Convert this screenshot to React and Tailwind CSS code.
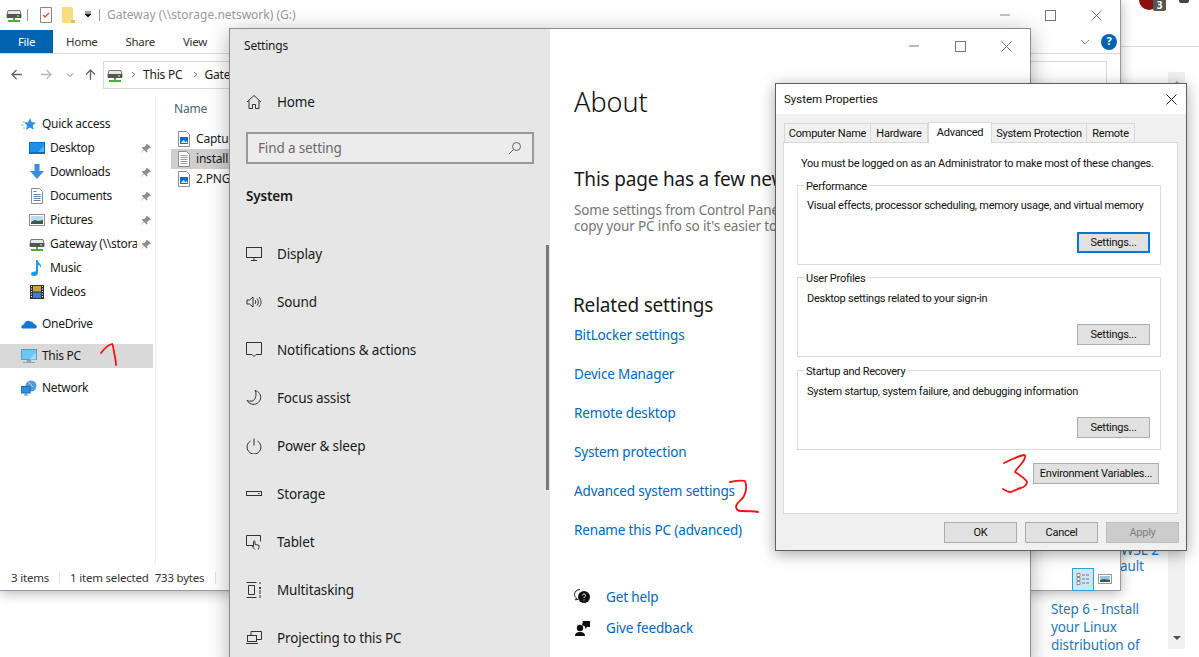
import React from "react";

const Ic = ({ s = 16, vb, className = "", children }) => (
  <svg width={s} height={s} viewBox={vb || `0 0 ${s} ${s}`} fill="none" className={"shrink-0 " + className}>{children}</svg>
);

const Drive = () => (
  <Ic s={16}>
    <path d="M2 3.500h12l1 4v3H1v-3z" fill="#e8e8e8" stroke="#777" />
    <rect x="1" y="7" width="14" height="4" fill="#555" />
    <circle cx="12" cy="9" r="1" fill="#7fe04f" />
    <path d="M7 11h2v2h5v2H2v-2h5z" fill="#4caf32" />
  </Ic>
);
const Pin = () => (
  <Ic s={11} className="ml-auto">
    <path d="M6.500 1l3.500 3.500-1 .8-.8-.2-2 2 .2 1.700-.8.7-2.500-2.500-2.500 2.700-.3-.3 2.500-2.700-2-2 .8-.8 1.600.2 2-2-.2-.9z" fill="#8a8f96" />
  </Ic>
);
const FileImg = () => (
  <Ic s={16}>
    <path d="M2.500.5h8l3 3v12h-11z" fill="#fff" stroke="#8d8d8d" />
    <rect x="4" y="6" width="8" height="7" fill="#0b6fc4" />
    <path d="M4.500 12l3-3 2 2 1-1 1.500 2z" fill="#cfe8ff" />
  </Ic>
);
const FileTxt = () => (
  <Ic s={16}>
    <path d="M2.500.5h8l3 3v12h-11z" fill="#fff" stroke="#8d8d8d" />
    <path d="M4.500 4.500h7M4.500 6.500h7M4.500 8.500h7M4.500 10.500h7M4.500 12.500h7" stroke="#9a9a9a" />
  </Ic>
);

const NavIcons = {
  quick: (
    <Ic s={16}><path d="M9 2l1.800 4.200 4.200.3-3.300 2.800 1.100 4.400L9 11.400l-4 2.300 1.100-4.400L3 6.500l4.200-.3z" fill="#2b8fe3" /><path d="M1 6h3M0 9h3M2 12h2" stroke="#8cc4f0" /></Ic>
  ),
  desktop: (
    <Ic s={16}><rect x=".5" y="2.500" width="15" height="10" fill="#1e90e8" stroke="#0a6fc4" /><path d="M0 13.500h16" stroke="#0a6fc4" /><path d="M9 12l6-6v6z" fill="#55b4f5" /></Ic>
  ),
  down: (
    <Ic s={16}><path d="M5.500 0h5v7H15l-7 8-7-8h4.500z" fill="#3a8fdc" /></Ic>
  ),
  docs: (
    <Ic s={16}><path d="M2.500.5h8l3 3v12h-11z" fill="#fff" stroke="#8d8d8d" /><path d="M4.500 3.500h3M4.500 6.500h7M4.500 8.500h7M4.500 10.500h7M4.500 12.500h7" stroke="#5a80a8" /></Ic>
  ),
  pics: (
    <Ic s={16}><rect x=".5" y="2.500" width="15" height="11" fill="#fff" stroke="#8d8d8d" /><rect x="2" y="4" width="12" height="8" fill="#bcdcf0" /><path d="M2 10l4-2 3 1 5-1v4H2z" fill="#3d5a4c" /></Ic>
  ),
  music: (
    <Ic s={16}><path d="M7 0h1.500c.5 3 4.500 4 3.500 8-.4-1.500-1.500-2.800-3-3v7.500C9 14.500 7.500 16 5 16c-2 0-3-1-3-2 0-1.800 2.500-3 5-2.500z" fill="#1b9af0" /></Ic>
  ),
  video: (
    <Ic s={16}><rect x="1" y="1" width="14" height="14" fill="#333" /><rect x="4" y="2" width="8" height="5.500" fill="#c9a53c" /><rect x="4" y="8.500" width="8" height="5.500" fill="#3d7ed0" /><path d="M2 2.500h1M2 5h1M2 7.500h1M2 10h1M2 12.500h1M13 2.500h1M13 5h1M13 7.500h1M13 10h1M13 12.500h1" stroke="#fff" /></Ic>
  ),
  cloud: (
    <Ic s={16}><path d="M1 12.500c-1.500-1.500-.5-4 2-4 .5-3 4-5 6.500-3 2 0 3 1 3.300 2.500 1.500 0 3 1.300 3 2.800 0 1-.8 1.700-1.800 1.700H2.500c-.6 0-1.100 0-1.500 0z" fill="#0f78d4" /></Ic>
  ),
  pc: (
    <Ic s={16}><rect x=".5" y="1.500" width="15" height="10" fill="#6fc5f7" stroke="#5a9cc8" /><path d="M8 11.500l7-7v7z" fill="#9ddcfb" /><path d="M6 12.500h4v1H6zM2 14.500h12" stroke="#8fa4b3" /></Ic>
  ),
  net: (
    <Ic s={16}><circle cx="10" cy="6" r="5.500" fill="#4e9bd8" /><path d="M7 2c3 1 3 4 5 5" stroke="#b5dcf5" /><rect x="0" y="6.500" width="9" height="6.500" fill="#2b90e0" stroke="#1a6cae" /><path d="M3 15h4M5 13v2" stroke="#5b7f9c" /></Ic>
  ),
};

const NavItem = ({ icon, label, pin, sub, active, clip }) => (
  <div className={`h-6 flex items-center text-[12px] tracking-[-0.3px] text-[#1a1a1a] ${sub ? "pl-[29px]" : "pl-[21px]"} pr-[3px] ${active ? "bg-[#d9d9d9]" : ""}`}>
    <span className="w-[21px]">{icon}</span>
    <span className={clip ? "w-[87px] overflow-hidden whitespace-nowrap" : "whitespace-nowrap"}>{label}</span>
    {pin && <Pin />}
  </div>
);

const Explorer = () => (
  <div className="absolute left-0 top-0 w-[1121px] h-[591px] bg-white border-r border-b border-[#9a9a9a] shadow-[0_2px_12px_rgba(0,0,0,0.3)] flex flex-col">
    <div className="h-[30px] flex items-center pl-[6px] shrink-0">
      <Drive />
      <span className="w-px h-[12px] bg-[#999] ml-[5px]" />
      <Ic s={16} className="ml-[10px]"><path d="M2.500 .5h11v15h-11z" fill="#fff" stroke="#888" /><path d="M5 8l2 2 4-4" stroke="#e2531e" strokeWidth="1.400" /></Ic>
      <Ic s={16} className="ml-[7px]"><path d="M1 0h10l1 2v14H1z" fill="#fbdc7d" /><path d="M10 13h4v3h-4z" fill="#e8c050" /></Ic>
      <Ic s={8} className="ml-[7px]"><path d="M1 1h6M1 3h6l-3 3z" fill="#111" stroke="#111" strokeWidth=".8" /></Ic>
      <span className="w-px h-[12px] bg-[#999] ml-[7px]" />
      <span className="ml-[7px] text-[12px] text-[#9b9b9b] whitespace-nowrap">Gateway (\\storage.netswork) (G:)</span>
      <div className="ml-auto flex items-center">
        <Ic s={10} className="mr-[35px]"><path d="M0 5h10" stroke="#888" /></Ic>
        <Ic s={11} className="mr-[35px]"><rect x=".5" y=".5" width="10" height="10" stroke="#777" /></Ic>
        <Ic s={11} className="mr-[18px]"><path d="M.5 .5l10 10M10.500 .5l-10 10" stroke="#777" /></Ic>
      </div>
    </div>
    <div className="h-[24px] flex items-center border-b border-[#dadada] shrink-0 text-[11.500px] tracking-[-0.3px] text-[#333]">
      <span className="w-[53px] h-[23px] bg-[#0063b1] text-white flex items-center justify-center">File</span>
      <span className="ml-[13px]">Home</span>
      <span className="ml-[28px]">Share</span>
      <span className="ml-[28px]">View</span>
      <div className="ml-auto flex items-center pr-[3px]">
        <Ic s={10} className="mr-[11px]"><path d="M1 3l4 4 4-4" stroke="#888" /></Ic>
        <div className="w-4 h-4 rounded-full bg-[#0063b1] text-white text-[11px] font-bold flex items-center justify-center">?</div>
      </div>
    </div>
    <div className="h-[42px] flex items-center shrink-0 pl-[10px] pr-[13px] pb-[1px]">
      <Ic s={13}><path d="M12 6.500H2M6.500 2l-4.500 4.500 4.500 4.500" stroke="#666" strokeWidth="1.300" /></Ic>
      <Ic s={13} className="ml-[17px]"><path d="M1 6.500h10M6.500 2l4.500 4.500-4.500 4.500" stroke="#bbb" strokeWidth="1.300" /></Ic>
      <Ic s={8} className="ml-[13px]"><path d="M1 2.500l3 3 3-3" stroke="#777" /></Ic>
      <Ic s={13} className="ml-[10px]"><path d="M6.500 12V2M2 6.500L6.500 2 11 6.500" stroke="#666" strokeWidth="1.300" /></Ic>
      <div className="ml-[6px] flex-1 h-[28px] border border-[#d9d9d9] flex items-center pl-[3px] text-[12px] tracking-[-0.2px] text-[#1a1a1a]">
        <Drive />
        <Ic s={7} className="ml-[7px]"><path d="M2 1l3 2.500L2 6" stroke="#777" /></Ic>
        <span className="ml-[6px]">This PC</span>
        <Ic s={7} className="ml-[9px]"><path d="M2 1l3 2.500L2 6" stroke="#777" /></Ic>
        <span className="ml-[6px] whitespace-nowrap">Gateway (\\storage.netswork) (G:)</span>
      </div>
    </div>
    <div className="flex-1 flex min-h-0">
      <div className="w-[156px] shrink-0 border-r border-[#efefef] pt-[16px] flex flex-col">
        <NavItem icon={NavIcons.quick} label="Quick access" />
        <NavItem sub icon={NavIcons.desktop} label="Desktop" pin />
        <NavItem sub icon={NavIcons.down} label="Downloads" pin />
        <NavItem sub icon={NavIcons.docs} label="Documents" pin />
        <NavItem sub icon={NavIcons.pics} label="Pictures" pin />
        <NavItem sub clip icon={<Drive />} label="Gateway (\\storage.netswork) (G:)" pin />
        <NavItem sub icon={NavIcons.music} label="Music" />
        <NavItem sub icon={NavIcons.video} label="Videos" />
        <div className="h-2" />
        <NavItem icon={NavIcons.cloud} label="OneDrive" />
        <div className="h-2" />
        <div className="w-[153px]"><NavItem active icon={NavIcons.pc} label="This PC" /></div>
        <div className="h-2" />
        <NavItem icon={NavIcons.net} label="Network" />
      </div>
      <div className="flex-1 pl-[15px] text-[12px] tracking-[-0.2px] text-[#1a1a1a]">
        <div className="h-[26px] pl-[3px] flex items-center text-[#4c607a]">Name</div>
        <div className="h-[6.500px]" />
        {[
          [<FileImg />, "Capture.PNG", false],
          [<FileTxt />, "install script.txt", true],
          [<FileImg />, "2.PNG", false],
        ].map(([i, t, sel]) => (
          <div key={t} className={`h-[20.250px] flex items-center gap-[4px] pl-[5px] ${sel ? "bg-[#cfcfcf]" : ""}`}>
            {i}
            <span className="whitespace-nowrap">{t}</span>
          </div>
        ))}
      </div>
    </div>
    <div className="h-[25px] shrink-0 flex items-center pl-[11px] text-[11.500px] tracking-[-0.2px] text-[#333]">
      <span>3 items</span>
      <span className="w-px h-[12px] bg-[#e5e5e5] ml-[10px] mr-[10px]" />
      <span>1 item selected</span>
      <span className="ml-[6px]">733 bytes</span>
      <span className="w-px h-[12px] bg-[#e5e5e5] ml-[11px]" />
      <div className="ml-auto mr-[4px] mt-[3px] flex items-center">
        <div className="w-[22px] h-[23px] bg-[#cce8f6] border border-[#2ea0dc] flex items-center justify-center">
          <Ic s={14}><path d="M1 1.500h3v3H1zM1 5.500h3v3H1zM1 9.500h3v3H1z" stroke="#888" fill="#fff" /><path d="M6 3h3M10 3h3M6 7h3M10 7h3M6 11h3M10 11h3" stroke="#777" /></Ic>
        </div>
        <div className="w-[22px] flex justify-center">
          <Ic s={14}><rect x=".5" y="2.500" width="13" height="9" fill="#fff" stroke="#999" /><rect x="2" y="4" width="10" height="6" fill="#9cc4e4" /><path d="M2 8l4-1 6 1v2H2z" fill="#3d5a4c" /></Ic>
        </div>
      </div>
    </div>
  </div>
);

const S = { fill: "none", stroke: "#333" };
const SetIcons = {
  home: <><path {...S} d="M1 8l7-6.500L15 8M3 6.500v8h3.500v-4h3v4H13v-8" /></>,
  display: <><rect {...S} x=".5" y="1.500" width="15" height="10" /><path {...S} d="M8 11.500v3M5 14.500h6" /></>,
  sound: <><path {...S} d="M1 6v4h2.500L7 13V3L3.500 6zM9 6c1 1 1 3 0 4M11 4.500c1.800 2 1.800 5 0 7M13 3c2.700 3 2.700 7 0 10" /></>,
  notif: <><path {...S} d="M.5 .5h15v12h-5.500l-2 2-2-2H.5z" /></>,
  focus: <><path {...S} d="M9 .5c4 1 6.500 4.500 5.500 8.500-1 3.500-5 6.500-9 5-2-.5-3.500-2-4.500-3.500 4 1.500 7 .5 8-2 1.200-2.500 1.500-5.500 0-8z" /></>,
  power: <><path {...S} d="M8 .5v7M4.500 3a7 7 0 1 0 7 0" /></>,
  storage: <><rect {...S} x=".5" y="5.500" width="15" height="4" /><path {...S} d="M12 7.500h1.500" /></>,
  tablet: <><path {...S} d="M7 11.500H.5v-10h14v6" /><path {...S} d="M9 15.500c-1-1-2.500-2.500-2.500-3.500l1 .5v-5c0-1 1.500-1 1.500 0v3l4 .8v2.200l-.7 2" /></>,
  multi: <><path {...S} d="M.5 .5h10M.5 15.500h10M2.500 3.500h6v9h-6zM14 0v2M14 13v3" /><rect x="13" y="5" width="2" height="2" fill="#333" /><path {...S} d="M14 8v4" /></>,
  project: <><path {...S} d="M5 5V1.500h10.500v8H11" /><rect {...S} x="1.500" y="5.500" width="9" height="6" /><path {...S} d="M0 13.500h12" /></>,
};
const SetIcon = ({ d }) => <Ic s={16}>{SetIcons[d]}</Ic>;

const SetRow = ({ icon, label }) => (
  <div className="h-[48px] flex items-center gap-[15px] pl-[16px] text-[13.500px] tracking-[-0.15px] text-[#1a1a1a] shrink-0">
    <SetIcon d={icon} />
    <span className="whitespace-nowrap">{label}</span>
  </div>
);

const Links = ["BitLocker settings", "Device Manager", "Remote desktop", "System protection", "Advanced system settings", "Rename this PC (advanced)"];

const Settings = () => (
  <div className="absolute left-[229px] top-[28px] w-[802px] h-[640px] bg-white border border-[#8c8c8c] shadow-[0_4px_20px_rgba(0,0,0,0.3)] flex overflow-hidden">
    <div className="w-[320px] shrink-0 bg-[#e6e6e6] relative flex flex-col">
      <div className="h-[34px] flex items-center pl-[14px] text-[12px] tracking-[-0.2px] text-[#1a1a1a]">Settings</div>
      <div className="h-[48px] mt-[15px] flex items-center gap-[15px] pl-[16px] text-[13.500px] tracking-[-0.15px] text-[#1a1a1a] shrink-0">
        <SetIcon d="home" />
        <span>Home</span>
      </div>
      <div className="mt-[6px] ml-[16px] w-[288px] h-[32px] border-2 border-[#999] bg-[#ececec] flex items-center px-[10px] text-[13.500px] tracking-[-0.15px] text-[#6a6a6a]">
        <span>Find a setting</span>
        <Ic s={14} className="ml-auto"><circle cx="8.500" cy="5.500" r="4" stroke="#666" /><path d="M5.500 8.500L1 13" stroke="#666" /></Ic>
      </div>
      <div className="mt-[21px] pl-[16px] h-[22px] flex items-center text-[13.500px] font-semibold tracking-[-0.15px] text-[#1a1a1a]">System</div>
      <div className="h-[23px]" />
      <SetRow icon="display" label="Display" />
      <SetRow icon="sound" label="Sound" />
      <SetRow icon="notif" label="Notifications & actions" />
      <SetRow icon="focus" label="Focus assist" />
      <SetRow icon="power" label="Power & sleep" />
      <SetRow icon="storage" label="Storage" />
      <SetRow icon="tablet" label="Tablet" />
      <SetRow icon="multi" label="Multitasking" />
      <SetRow icon="project" label="Projecting to this PC" />
      <div className="absolute left-[316px] top-[216px] w-[3px] h-[245px] bg-[#7a7a7a]" />
    </div>
    <div className="flex-1 relative pl-[24px] flex flex-col">
      <div className="absolute right-0 top-0 h-[34px] flex items-center">
        <Ic s={10} className="mr-[36px]"><path d="M0 5h10" stroke="#777" /></Ic>
        <Ic s={11} className="mr-[35px]"><rect x=".5" y=".5" width="10" height="10" stroke="#777" /></Ic>
        <Ic s={11} className="mr-[18px]"><path d="M.5 .5l10 10M10.500 .5l-10 10" stroke="#777" /></Ic>
      </div>
      <div className="mt-[50px] h-[44px] flex items-center text-[27px] font-light text-[#111] leading-none">About</div>
      <div className="mt-[42px] h-[28px] flex items-center text-[19px] tracking-[-0.2px] text-[#1a1a1a] whitespace-nowrap">This page has a few new settings</div>
      <div className="mt-[9px] text-[13.500px] tracking-[-0.15px] leading-[16px] text-[#767676] whitespace-nowrap">
        <div>Some settings from Control Panel have moved, and you can</div>
        <div>copy your PC info so it's easier to share.</div>
      </div>
      <div className="mt-[57px] -ml-px h-[28px] flex items-center text-[19px] tracking-[-0.2px] text-[#1a1a1a]">Related settings</div>
      <div className="-mt-[3px] flex flex-col">
        {Links.map((l) => (
          <div key={l} className="h-[39px] flex items-center text-[13.500px] tracking-[-0.15px] text-[#0067c0] whitespace-nowrap">{l}</div>
        ))}
      </div>
      <div className="mt-[32px] flex flex-col">
        <div className="h-[31px] flex items-center gap-[15px] text-[13.500px] tracking-[-0.15px] text-[#0067c0]">
          <Ic s={17}><path d="M6 .5C2.500 .5 .5 3 .5 5.500c0 1.500.8 2.800 2 3.500l-1 2 3-1" stroke="#111" /><circle cx="10" cy="8" r="6" fill="#111" /><path d="M8 10l4 5-2-5z" fill="#111" /><path d="M8.500 6.500c0-2 3-2 3 0 0 1-1.500 1-1.500 2.500M10 10.500v1" stroke="#fff" /></Ic>
          <span>Get help</span>
        </div>
        <div className="h-[31px] flex items-center gap-[15px] text-[13.500px] tracking-[-0.15px] text-[#0067c0]">
          <Ic s={17}><circle cx="6" cy="8" r="3.200" fill="#111" /><path d="M1 16c0-3 2-4 5-4s5 1 5 4z" fill="#111" /><path d="M9 1h7v6h-3l-2 2V6.500L8 5z" fill="#111" /></Ic>
          <span>Give feedback</span>
        </div>
      </div>
    </div>
  </div>
);

const dlg = "font-['Roboto',sans-serif] text-[11px] tracking-[-0.25px] text-[#111] whitespace-nowrap";

const Tab = ({ w, label, active }) => (
  <div
    className={
      active
        ? `h-[21px] -mt-[2px] mb-[-1px] z-10 bg-white border border-b-0 border-[#d9d9d9] flex items-center justify-center shrink-0 ${dlg}`
        : `h-[19px] pt-[2px] bg-[#f0f0f0] border border-b-0 border-l-0 first:border-l border-[#d9d9d9] flex items-center justify-center shrink-0 ${dlg}`
    }
    style={{ width: w }}
  >
    {label}
  </div>
);

const Btn = ({ w = 73, label, primary, disabled, className = "" }) => (
  <div
    className={`h-[21px] pt-[2px] flex items-center justify-center ${dlg} ${
      primary ? "border-2 border-[#0078d7] bg-[#e1e1e1]" : disabled ? "border border-[#bfbfbf] bg-[#cccccc] !text-[#808080]" : "border border-[#adadad] bg-[#e1e1e1]"
    } ${className}`}
    style={{ width: w }}
  >
    {label}
  </div>
);

const Group = ({ title, text, primary, className = "", top = "pt-[13px]", gap = "mt-[17px]" }) => (
  <div className={`relative h-[80px] border border-[#dcdcdc] pl-[9px] pr-[10px] ${top} flex flex-col ${className}`}>
    <span className={`absolute left-[6px] -top-[7px] bg-white px-[2px] leading-[16px] ${dlg}`}>{title}</span>
    <div className={`leading-[16px] ${dlg}`}>{text}</div>
    <Btn label="Settings..." primary={primary} className={`ml-auto ${gap}`} />
  </div>
);

const SysProps = () => (
  <div className="absolute left-[775px] top-[83px] w-[412px] h-[468px] bg-[#f0f0f0] border border-[#5f5f5f] shadow-[0_3px_14px_rgba(0,0,0,0.35)] flex flex-col">
    <div className="h-[30px] shrink-0 bg-white flex items-center pl-[8px] pt-[1px]">
      <span className="font-['Roboto',sans-serif] text-[11.500px] text-[#111] whitespace-nowrap">System Properties</span>
      <Ic s={11} className="ml-auto mr-[9px]"><path d="M.5 .5l10 10M10.500 .5l-10 10" stroke="#222" /></Ic>
    </div>
    <div className="flex-1 px-[7px] pt-[9px] flex flex-col">
      <div className="flex pl-[1px] h-[19px] items-end shrink-0">
        <Tab w={87} label="Computer Name" />
        <Tab w={57} label="Hardware" />
        <Tab w={64} label="Advanced" active />
        <Tab w={95} label="System Protection" />
        <Tab w={48} label="Remote" />
      </div>
      <div className="w-[395px] h-[372px] border border-[#d9d9d9] bg-white pl-[13px] flex flex-col shrink-0">
        <div className={`ml-[4px] mt-[13px] h-[16px] flex items-center ${dlg}`}>You must be logged on as an Administrator to make most of these changes.</div>
        <Group className="mt-[13px] w-[364px]" top="pt-[12px]" gap="mt-[18px]" title="Performance" text="Visual effects, processor scheduling, memory usage, and virtual memory" primary />
        <Group className="mt-[12px] w-[364px]" title="User Profiles" text="Desktop settings related to your sign-in" />
        <Group className="mt-[13px] w-[364px]" title="Startup and Recovery" text="System startup, system failure, and debugging information" />
        <Btn w={126} label="Environment Variables..." className="ml-[236px] mt-[13px]" />
      </div>
      <div className="flex gap-[8px] mt-[8px] pl-[161px]">
        <Btn label="OK" />
        <Btn label="Cancel" />
        <Btn label="Apply" disabled />
      </div>
    </div>
  </div>
);

const Page = () => (
  <div className="absolute inset-0 bg-white flex justify-end">
    <div className="w-[78px] h-full relative">
      <div className="h-[47px] border-b border-[#dcdcdc] relative">
        <div className="absolute left-[18px] -top-[10px] w-[20px] h-[20px] rounded-full bg-[#8c1010]" />
        <div className="absolute left-[32px] top-0 w-[13px] h-[11px] bg-[#555] rounded-b-[2px] text-white text-[10px] font-bold leading-[11px] text-center">3</div>
        <div className="absolute left-[58px] -top-[5px] w-[10px] h-[8px] bg-[#444] rounded-[2px]" />
      </div>
      <div className="absolute left-[47px] top-[72px] w-[17px] h-[577px] bg-[#f1f1f1] flex flex-col items-center justify-between py-[6px]">
        <Ic s={10}><path d="M1 7l4-4 4 4z" fill="#a3a3a3" /></Ic>
        <Ic s={10}><path d="M1 3l4 4 4-4z" fill="#505050" /></Ic>
      </div>
    </div>
  </div>
);

const Behind = () => (
  <div className="absolute left-[1051px] top-[541px] w-[115px] text-[13.500px] tracking-[-0.1px] leading-[18px] text-[#1f77bd]">
    <div className="h-[15px] pl-[70px] whitespace-nowrap">WSL 2</div>
    <div className="h-[18px] mt-[1px] pl-[69px] whitespace-nowrap">ault</div>
    <div className="mt-[25px]">Step 6 - Install</div>
    <div>your Linux</div>
    <div>distribution of</div>
  </div>
);

const Marks = () => (
  <svg className="absolute inset-0 pointer-events-none" width="1199" height="657" fill="none" stroke="#f01414" strokeWidth="1.800" strokeLinecap="round" strokeLinejoin="round">
    <path d="M101 353c3-4 7-8 11-9 1 0 1 3 2 8 1 5 2 9 2 13" />
    <path d="M730 482c5-1 12-2 15-1 2 5 1 11-1 15-2 4-7 6-8 10 0 3 1 5 5 5 5 0 12 0 17 1" />
    <path d="M1004 463c6-3 14-7 20-8 2 0 1 3 0 5-2 4-7 8-9 12 3 2 10 6 12 10 0 3-3 5-6 6-5 1-8 4-11 4-3 0-5-2-7-3" />
  </svg>
);

export default function App() {
  return (
    <div className="relative w-[1199px] h-[657px] overflow-hidden bg-white font-['Noto_Sans','Open_Sans',sans-serif]">
      <Page />
      <Behind />
      <Explorer />
      <Settings />
      <SysProps />
      <Marks />
    </div>
  );
}
